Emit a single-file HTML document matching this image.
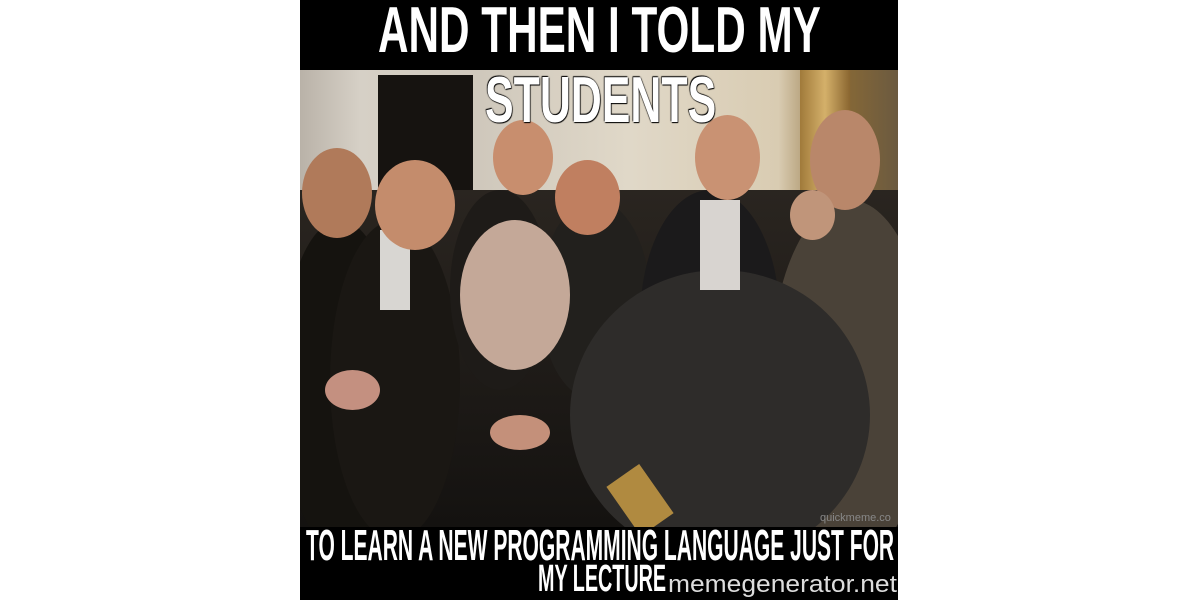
<!DOCTYPE html>
<html><head><meta charset="utf-8"><style>
*{margin:0;padding:0}
body{width:1200px;height:600px;background:#fff;position:relative;overflow:hidden;font-family:"Liberation Sans",sans-serif}
#m{position:absolute;left:300px;top:0;width:598px;height:600px;background:#000;overflow:hidden}
#p{position:absolute;left:0;top:70px;width:598px;height:457px;overflow:hidden;background:#1c1915}
.b{position:absolute;border-radius:50%}
.r{position:absolute}
.t{position:absolute;color:#fff;font-weight:bold;white-space:nowrap;transform-origin:0 0;text-shadow:0 0 2px #000,1px 1px 1px #000,-1px -1px 1px #000;line-height:1}
</style></head><body>
<div id="m">
<div id="p">
 <div class="r" style="left:0;top:0;width:598px;height:170px;background:linear-gradient(90deg,#b9b2a8 0,#d6d0c6 10%,#cfc8bc 30%,#e0d8c8 55%,#d9ccb2 80%,#8a6a35 90%,#6b5a40 100%)"></div>
 <div class="r" style="left:78px;top:5px;width:95px;height:200px;background:#161310"></div>
 <div class="r" style="left:500px;top:0;width:50px;height:120px;background:linear-gradient(90deg,#a07a3a,#d4b06a,#8a6630)"></div>
 <div class="r" style="left:0;top:120px;width:598px;height:337px;background:linear-gradient(#2a2520,#141210)"></div>
 <div class="b" style="left:-20px;top:150px;width:120px;height:330px;background:#15130f"></div>
 <div class="b" style="left:30px;top:150px;width:130px;height:320px;background:#1a1713"></div>
 <div class="b" style="left:150px;top:120px;width:100px;height:200px;background:#1e1b18"></div>
 <div class="b" style="left:240px;top:130px;width:110px;height:200px;background:#22201d"></div>
 <div class="b" style="left:340px;top:120px;width:140px;height:260px;background:#1b1a1b"></div>
 <div class="b" style="left:470px;top:130px;width:160px;height:360px;background:#4a4238"></div>
 <div class="b" style="left:270px;top:200px;width:300px;height:290px;background:#2e2c2a"></div>
 <div class="r" style="left:400px;top:130px;width:40px;height:90px;background:#d8d4d0"></div>
 <div class="r" style="left:80px;top:160px;width:30px;height:80px;background:#d8d6d2"></div>
 <div class="b" style="left:2px;top:78px;width:70px;height:90px;background:#b07a5a"></div>
 <div class="b" style="left:75px;top:90px;width:80px;height:90px;background:#c48c6c"></div>
 <div class="b" style="left:193px;top:50px;width:60px;height:75px;background:#c88e6e"></div>
 <div class="b" style="left:255px;top:90px;width:65px;height:75px;background:#c07f60"></div>
 <div class="b" style="left:395px;top:45px;width:65px;height:85px;background:#c99273"></div>
 <div class="b" style="left:510px;top:40px;width:70px;height:100px;background:#b9876a"></div>
 <div class="b" style="left:160px;top:150px;width:110px;height:150px;background:#c4a898"></div>
 <div class="b" style="left:25px;top:300px;width:55px;height:40px;background:#c49080"></div>
 <div class="b" style="left:190px;top:345px;width:60px;height:35px;background:#c4907a"></div>
 <div class="b" style="left:490px;top:120px;width:45px;height:50px;background:#c0957a"></div>
 <div class="r" style="left:320px;top:400px;width:40px;height:60px;background:#b08a40;transform:rotate(-35deg)"></div>
</div>
<div class="t" style="left:78px;top:-3px;font-size:65px;transform:scaleX(0.65)">AND THEN I TOLD MY</div>
<div class="t" style="left:185px;top:67px;font-size:65px;transform:scaleX(0.66)">STUDENTS</div>
<div class="t" style="left:6px;top:524px;font-size:44px;transform:scaleX(0.478)">TO LEARN A NEW PROGRAMMING LANGUAGE JUST FOR</div>
<div class="t" style="left:238px;top:560px;font-size:38px;transform:scaleX(0.52)">MY LECTURE</div>
<div class="r" style="left:368px;top:571px;font-size:24px;color:#ddd;white-space:nowrap;transform-origin:0 0;transform:scaleX(1.1)">memegenerator.net</div>
<div class="r" style="left:520px;top:512px;font-size:11px;color:#888">quickmeme.co</div>
</div>
</body></html>
